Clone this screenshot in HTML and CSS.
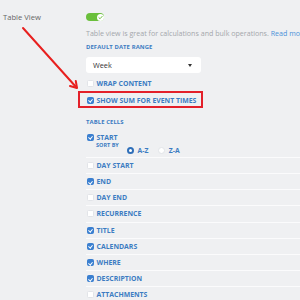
FILE: index.html
```html
<!DOCTYPE html>
<html>
<head>
<meta charset="utf-8">
<link rel="stylesheet" href="styles.css">
</head>
<body>
<div class="page">
  <div class="label">Table View</div>
  <div class="content">
    <div class="toggle"><span class="knob"><svg viewBox="0 0 8 8" width="8" height="8"><path d="M2.2 4.2 L3.5 5.4 L5.9 2.7" fill="none" stroke="#6abf3c" stroke-width="1.1" stroke-linecap="round" stroke-linejoin="round"/></svg></span></div>
    <div class="desc">Table view is great for calculations and bulk operations. <span class="link">Read more</span></div>
    <div class="heading">Default Date Range</div>
    <div class="select"><span>Week</span><span class="caret"></span></div>
    <div class="opt wrap"><span class="cb"></span>Wrap Content</div>
    <div class="opt highlight"><span class="cb on"></span>Show Sum For Event Times</div>
    <div class="heading cells">Table Cells</div>
    <div class="opt start"><span class="cb on"></span>Start</div>
    <div class="sort">
      <span class="sortby">Sort By</span>
      <span class="radio on"></span><span class="rlabel">A-Z</span>
      <span class="radio"></span><span class="rlabel">Z-A</span>
    </div>
    <div class="list">
      <div class="opt item"><span class="cb"></span>Day Start</div>
      <div class="opt item"><span class="cb on"></span>End</div>
      <div class="opt item"><span class="cb"></span>Day End</div>
      <div class="opt item"><span class="cb"></span>Recurrence</div>
      <div class="opt item"><span class="cb on"></span>Title</div>
      <div class="opt item"><span class="cb on"></span>Calendars</div>
      <div class="opt item"><span class="cb on"></span>Where</div>
      <div class="opt item"><span class="cb on"></span>Description</div>
      <div class="opt item"><span class="cb"></span>Attachments</div>
    </div>
  </div>
  <svg class="arrow" viewBox="0 0 300 300" width="300" height="300">
    <line x1="23" y1="28" x2="76.5" y2="87.5" stroke="#e8201f" stroke-width="2" stroke-linecap="round"/>
    <polyline points="70,86 77,88 75.8,81" fill="none" stroke="#e8201f" stroke-width="2" stroke-linecap="round" stroke-linejoin="round"/>
  </svg>
</div>
</body>
</html>
```

FILE: styles.css
```css
html, body {
  margin: 0;
  padding: 0;
  background: #eff0f2;
  width: 300px;
  height: 300px;
  overflow: hidden;
}
.page {
  position: relative;
  display: grid;
  grid-template-columns: 86px 1fr;
  font-family: "Open Sans", "Liberation Sans", sans-serif;
  width: 300px;
  height: 300px;
  overflow: hidden;
}
.label {
  padding: 12px 0 0 3px;
  font-size: 7.6px;
  line-height: 11px;
  color: #666;
}
.content {
  display: flex;
  flex-direction: column;
  min-width: 0;
}
.toggle {
  margin-top: 13px;
  width: 18px;
  height: 8px;
  border-radius: 4px;
  background: #6abf3c;
  position: relative;
  display: flex;
  justify-content: flex-end;
  align-items: center;
  padding-right: 0.5px;
  box-sizing: border-box;
}
.knob {
  width: 7px;
  height: 7px;
  border-radius: 50%;
  background: #fff;
  display: flex;
  align-items: center;
  justify-content: center;
}
.knob svg { width: 7px; height: 7px; }
.desc {
  margin-top: 7px;
  font-size: 7.1px;
  line-height: 10px;
  color: #a3a6ab;
  white-space: nowrap;
}
.link { color: #4a90d9; }
.heading {
  margin-top: 4px;
  font-size: 5.9px;
  line-height: 10px;
  font-weight: 700;
  text-transform: uppercase;
  color: #3c7cc2;
  letter-spacing: 0.1px;
}
.select {
  margin-top: 5px;
  width: 115px;
  height: 16px;
  background: #fff;
  border-radius: 3px;
  display: flex;
  align-items: center;
  justify-content: space-between;
  padding: 0 9px 0 7px;
  box-sizing: border-box;
  font-size: 7.3px;
  color: #333;
}
.caret {
  width: 0;
  height: 0;
  border-left: 2.5px solid transparent;
  border-right: 2.5px solid transparent;
  border-top: 3px solid #333;
}
.opt {
  display: flex;
  align-items: center;
  font-size: 6.9px;
  font-weight: 700;
  text-transform: uppercase;
  color: #3c7cc2;
  white-space: nowrap;
}
.cb {
  width: 7px;
  height: 7px;
  box-sizing: border-box;
  border-radius: 1.5px;
  background: #fff;
  border: 0.5px solid #e2e4e8;
  margin: 0 3px 0 0.5px;
  flex: none;
  position: relative;
}
.cb.on {
  background: #3a7fd0;
  border-color: #3a7fd0;
}
.cb.on::after {
  content: "";
  position: absolute;
  left: 1.9px;
  top: 0.6px;
  width: 1.6px;
  height: 3.2px;
  border-right: 1px solid #fff;
  border-bottom: 1px solid #fff;
  transform: rotate(40deg);
}
.wrap {
  margin-top: 2px;
  height: 16px;
}
.highlight {
  height: 16px;
  margin-top: 1px;
  position: relative;
}
.highlight::after {
  content: "";
  position: absolute;
  left: -8px;
  top: -1px;
  width: 125px;
  height: 17px;
  border: 2px solid #e3202a;
  box-sizing: border-box;
}
.cells {
  margin-top: 9px;
}
.start {
  margin-top: 3px;
  height: 14px;
}
.sort {
  display: flex;
  align-items: flex-start;
  height: 13px;
  padding-left: 10px;
  font-weight: 700;
  text-transform: uppercase;
  color: #3c7cc2;
}
.sortby {
  width: 31px;
  font-size: 5.5px;
  line-height: 6px;
  margin-top: -2px;
  white-space: nowrap;
}
.radio {
  margin-top: 3px;
  width: 7px;
  height: 7px;
  box-sizing: border-box;
  border-radius: 50%;
  background: #fff;
  border: 0.5px solid #e2e4e8;
  flex: none;
}
.radio.on {
  border: 2px solid #2f6fb9;
}
.rlabel {
  margin: 2.5px 10px 0 3.5px;
  font-size: 6.8px;
  line-height: 8px;
}
.list {
  display: flex;
  flex-direction: column;
}
.item {
  height: 15.15px;
  border-top: 1px solid #fbfbfc;
}
.arrow {
  position: absolute;
  left: 0;
  top: 0;
  pointer-events: none;
}
```
